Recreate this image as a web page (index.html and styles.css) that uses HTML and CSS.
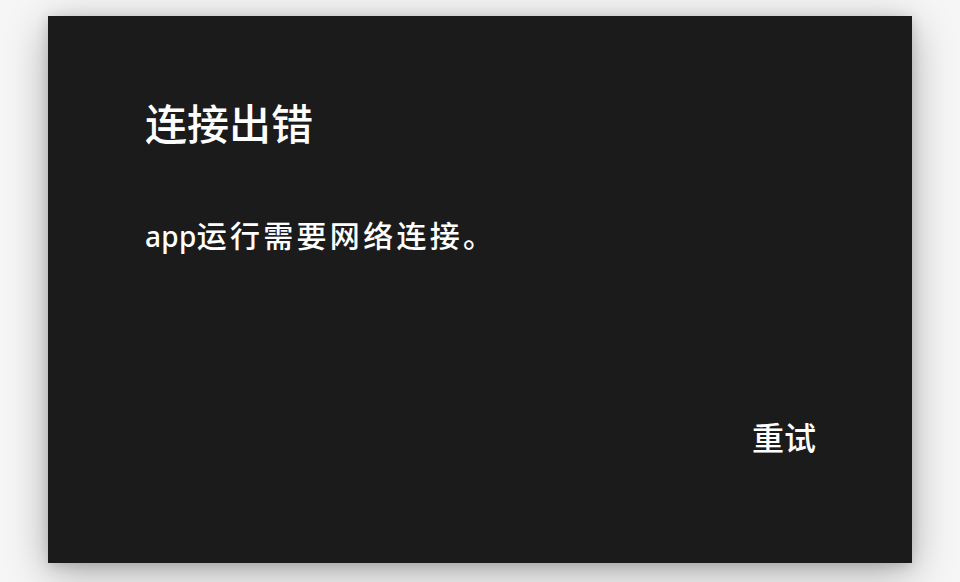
FILE: index.html
```html
<!DOCTYPE html>
<html lang="zh-CN">
<head>
<meta charset="utf-8">
<link rel="stylesheet" href="styles.css">
</head>
<body>
<div class="page">
  <div class="dialog">
    <h1 class="title">连接出错</h1>
    <p class="message"><span class="latin">app</span>运行需要网络连接。</p>
    <div class="actions">
      <button class="btn">重试</button>
    </div>
  </div>
</div>
</body>
</html>
```
FILE: styles.css
```css
html, body {
  margin: 0;
  padding: 0;
  background: #f6f6f6;
  font-family: "Noto Sans", "Noto Sans CJK SC", sans-serif;
}
.page {
  width: 960px;
  height: 582px;
  padding: 16px 48px 0 48px;
  box-sizing: border-box;
  overflow: hidden;
}
.dialog {
  width: 864px;
  height: 547px;
  background: #1b1b1b;
  box-shadow: 0 10px 40px rgba(0, 0, 0, 0.3), 0 2px 12px rgba(0, 0, 0, 0.15);
  display: flex;
  flex-direction: column;
  padding: 82px 96px 107px 97px;
  box-sizing: border-box;
  color: #ffffff;
}
.title {
  margin: 0;
  font-size: 42px;
  line-height: 48px;
  font-weight: 500;
  font-family: "Noto Sans CJK SC", sans-serif;
}
.message {
  margin: 70px 0 0 0;
  font-size: 30px;
  line-height: 40px;
  font-weight: 500;
  letter-spacing: 3.3px;
  flex: 1;
  font-family: "Noto Sans", "Noto Sans CJK SC", sans-serif;
}
.latin {
  font-size: 28px;
  letter-spacing: 0.3px;
}
.actions {
  display: flex;
  justify-content: flex-end;
}
.btn {
  background: none;
  border: none;
  padding: 0;
  color: #ffffff;
  font-size: 32px;
  line-height: 40px;
  font-weight: 500;
  font-family: "Noto Sans CJK SC", sans-serif;
}
```
